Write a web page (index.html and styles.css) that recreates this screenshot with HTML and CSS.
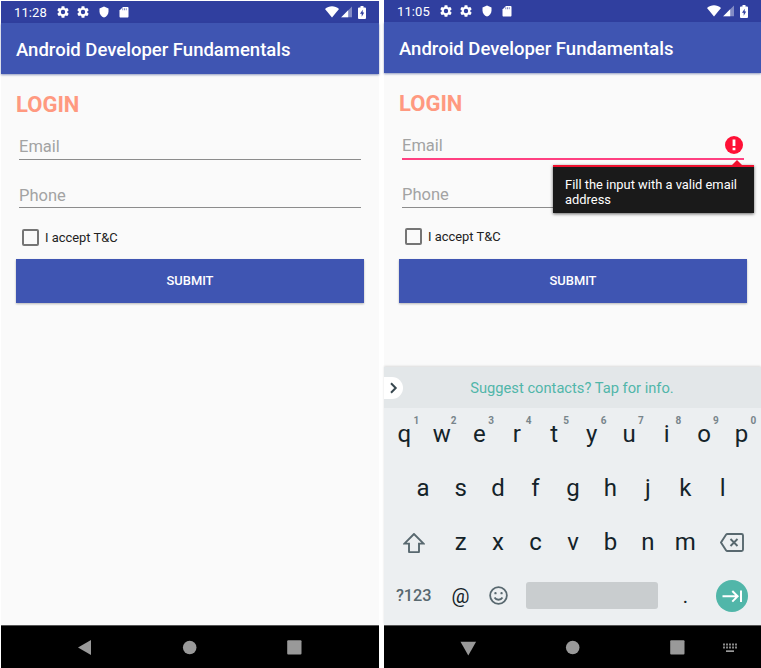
FILE: index.html
```html
<!DOCTYPE html>
<html lang="en">
<head>
<meta charset="utf-8">
<title>Android Developer Fundamentals</title>
<link rel="stylesheet" href="styles.css">
</head>
<body>
<svg class="defs" width="0" height="0">
  <symbol id="gear" viewBox="1.500 1.500 21 21"><path fill-rule="evenodd" d="M19.400 13c0-.3.1-.6.1-1s0-.7-.1-1l2.200-1.700c.2-.1.200-.4.100-.6l-2-3.500c-.1-.2-.4-.3-.6-.2l-2.500 1c-.5-.4-1.100-.7-1.700-1L14.500 2.400c0-.2-.2-.4-.5-.4h-4c-.3 0-.5.2-.5.4L9.100 5c-.6.300-1.200.6-1.700 1l-2.500-1c-.2-.1-.5 0-.6.200l-2 3.500c-.1.200-.1.500.1.600L4.600 11c0 .3-.1.700-.1 1s0 .7.100 1l-2.200 1.700c-.2.100-.2.400-.1.600l2 3.500c.1.200.4.300.6.200l2.500-1c.5.400 1.100.7 1.700 1l.4 2.600c0 .2.200.4.500.4h4c.3 0 .5-.2.5-.4l.4-2.600c.6-.3 1.200-.6 1.700-1l2.500 1c.2.100.5 0 .6-.2l2-3.500c.1-.2.100-.5-.1-.6zM12 15.800a3.800 3.800 0 1 1 0-7.600 3.800 3.800 0 0 1 0 7.600z"/></symbol>
  <symbol id="shield" viewBox="0 0 24 24"><path d="M12 1 3 5v6c0 5.600 3.800 10.700 9 12 5.200-1.300 9-6.400 9-12V5z"/></symbol>
  <symbol id="card" viewBox="0 0 24 24"><path d="M19 2H10L3 9v12c0 1 .8 2 2 2h14c1.200 0 2-1 2-2V4c0-1-.8-2-2-2z"/><path class="slots" d="M9.500 4.500v4M13 4.500v4M16.500 4.500v4"/></symbol>
  <symbol id="wifi" viewBox="0 0 14 12"><path d="M7 11.500 0 3C4-.7 10-.7 14 3z"/></symbol>
  <symbol id="signal" viewBox="0 0 12 12"><path opacity=".4" d="M0 12 12 0v12z"/><path d="M0 12 7.500 4.500V12z"/></symbol>
  <symbol id="battery" viewBox="0 0 8 13"><path fill-rule="evenodd" d="M2.500 0h3v1.500H7q1 0 1 1V12q0 1-1 1H1q-1 0-1-1V2.500q0-1 1-1h1.500zM4.700 3.800 2 7.700h1.700v3l2.500-4.100H4.700z"/></symbol>
</svg>
<main class="screens">
  <section class="phone phone-plain">
    <header class="status"><span class="time">11:28</span>
      <svg class="sicon"><use href="#gear"/></svg><svg class="sicon"><use href="#gear"/></svg><svg class="sicon"><use href="#shield"/></svg><svg class="sicon"><use href="#card"/></svg>
      <span class="spacer"></span><svg class="wifi"><use href="#wifi"/></svg><svg class="signal"><use href="#signal"/></svg><svg class="battery"><use href="#battery"/></svg>
    </header>
    <div class="appbar"><span>Android Developer Fundamentals</span></div>
    <div class="form">
      <h1>LOGIN</h1>
      <div class="field">Email</div>
      <div class="field phone-number">Phone</div>
      <div class="terms"><i class="box"></i><span>I accept T&amp;C</span></div>
      <div class="submit">SUBMIT</div>
    </div>
    <nav class="nav">
      <svg viewBox="0 0 378 42"><path d="M77 21.500 90 14v15z"/><circle cx="188.700" cy="21.500" r="6.800"/><rect x="286.200" y="14.300" width="14.300" height="14.300" rx="1"/></svg>
    </nav>
  </section>
  <section class="phone phone-error">
    <header class="status"><span class="time">11:05</span>
      <svg class="sicon"><use href="#gear"/></svg><svg class="sicon"><use href="#gear"/></svg><svg class="sicon"><use href="#shield"/></svg><svg class="sicon"><use href="#card"/></svg>
      <span class="spacer"></span><svg class="wifi"><use href="#wifi"/></svg><svg class="signal"><use href="#signal"/></svg><svg class="battery"><use href="#battery"/></svg>
    </header>
    <div class="appbar"><span>Android Developer Fundamentals</span></div>
    <div class="form">
      <h1>LOGIN</h1>
      <div class="field invalid">Email
        <svg class="alert" viewBox="0 0 18 18"><circle cx="9" cy="9" r="9"/><path d="M7.600 3.600h2.800v6.400H7.600zM7.600 11.700h2.800v2.600H7.600z"/></svg>
        <div class="tip"><span>Fill the input with a valid email address</span></div>
      </div>
      <div class="field phone-number">Phone</div>
      <div class="terms"><i class="box"></i><span>I accept T&amp;C</span></div>
      <div class="submit">SUBMIT</div>
    </div>
    <div class="keyboard">
      <div class="suggest"><span class="expand"><svg viewBox="0 0 19 22"><path d="m7 6.300 4.700 4.700L7 15.700"/></svg></span><span class="suggest-text">Suggest contacts? Tap for info.</span></div>
      <div class="keys">
        <div class="row"><b>q<sup>1</sup></b><b>w<sup>2</sup></b><b>e<sup>3</sup></b><b>r<sup>4</sup></b><b>t<sup>5</sup></b><b>y<sup>6</sup></b><b>u<sup>7</sup></b><b>i<sup>8</sup></b><b>o<sup>9</sup></b><b>p<sup>0</sup></b></div>
        <div class="row home"><b>a</b><b>s</b><b>d</b><b>f</b><b>g</b><b>h</b><b>j</b><b>k</b><b>l</b></div>
        <div class="row"><b class="wide"><svg class="shift" viewBox="0 0 22 20"><path d="M11 1 1.400 10.600H6V18.500q0 .8.800.8h8.400q.8 0 .8-.8V10.600h4.600z"/></svg></b><b>z</b><b>x</b><b>c</b><b>v</b><b>b</b><b>n</b><b>m</b><b class="wide"><svg class="erase" viewBox="0 0 24 19"><path d="M7.500 1H21.500q1.500 0 1.500 1.500v14q0 1.500-1.500 1.500H7.500Q6.500 18 6 17.200L1 9.500 6 1.800Q6.500 1 7.500 1zM10.500 6l7 7M17.500 6l-7 7"/></svg></b></div>
        <div class="row bottom"><b class="wide symbols">?123</b><b class="at">@</b><b><svg class="smile" viewBox="0 0 20 20"><circle cx="10" cy="10" r="8.800"/><path d="M5.800 12.200q1.400 2.300 4.200 2.300t4.200-2.300"/><path class="eyes" d="M6.800 7.500h.01M13.200 7.500h.01"/></svg></b><b class="space"><i></i></b><b class="dot">.</b><b class="wide"><svg class="next" viewBox="0 0 32 32"><circle cx="16" cy="16" r="16"/><path d="M6.500 16.300H21M16.300 11l5.300 5.300-5.300 5.300M25 10.500v11.500"/></svg></b></div>
      </div>
    </div>
    <nav class="nav">
      <svg viewBox="0 0 377 42"><path d="M76.500 15.800h15.600L84.300 29.500z"/><circle cx="188.700" cy="21.500" r="6.800"/><rect x="286.200" y="14.300" width="14.300" height="14.300" rx="1"/><path class="dots" d="M339 18.500h14M339 21.500h14"/><path d="M342 24.300h8v1.700h-8z"/></svg>
    </nav>
  </section>
</main>
</body>
</html>
```

FILE: styles.css
```css
* { box-sizing: border-box; }
body { margin: 0; background: #fff; font-family: Roboto, sans-serif; }
.defs { position: absolute; }
.screens { display: flex; gap: 5px; width: 761px; height: 668px; padding-left: 1px; overflow: hidden; }
.phone { display: flex; flex-direction: column; width: 378px; flex: none; background: #fafafa; }
.phone-plain { margin-top: 1px; height: 667px; }
.phone-error { width: 377px; height: 668px; }
.status { display: flex; align-items: center; height: 22px; flex: none; padding: 0 13px; background: #303f9f; color: #fff; }
.time { width: 42.500px; font-size: 13px; letter-spacing: .1px; }
.sicon { width: 12px; height: 12px; margin-right: 8.500px; fill: #fff; }
.slots { stroke: #303f9f; stroke-width: 1.200; }
.spacer { flex: 1; }
.wifi { width: 14px; height: 12px; fill: #fff; }
.signal { width: 11.500px; height: 11.500px; margin-left: 2px; fill: #fff; }
.battery { width: 8px; height: 13px; margin-left: 6px; fill: #fff; }
.appbar { display: flex; align-items: center; height: 51px; flex: none; padding: 2px 0 0 15px; background: #3f55b2; color: #fff; font-size: 18.500px; font-weight: 500; box-shadow: 0 1px 2px rgba(40, 60, 130, .5); white-space: nowrap; }
.form { flex: 1; padding: 0 15px; }
.phone-error .form { padding-right: 14px; }
h1 { margin: 0; height: 60px; line-height: 62px; font-size: 22px; font-weight: 700; color: #ff9980; }
.field { position: relative; height: 26px; margin: 0 3px 22px; line-height: 25px; font-size: 16.500px; color: #a3a3a3; border-bottom: 1px solid #8c8c8c; }
.phone-number { margin-bottom: 7px; line-height: 27px; }
.field.invalid { height: 27px; border-bottom: 2px solid #ff4081; }
.alert { position: absolute; right: 1px; top: 3px; width: 18px; height: 18px; }
.alert circle { fill: #ff1036; }
.alert path { fill: #fff; }
.tip { position: absolute; z-index: 2; right: -10px; top: 32px; width: 201px; height: 48px; padding: 10px 12px; background: #1a1a1a; border-top: 2px solid #f0102e; color: #fff; font-size: 12.900px; line-height: 15px; box-shadow: 0 1px 3px rgba(0, 0, 0, .6); }
.tip::before { content: ""; position: absolute; right: 12px; top: -7px; border: 5px solid transparent; border-top: 0; border-bottom: 5px solid #f0102e; }
.phone-error .phone-number { line-height: 26px; }
.terms { display: flex; align-items: center; height: 44px; padding-left: 6px; font-size: 12.900px; color: #222; }
.phone-error .terms { padding-bottom: 1px; }
.box { width: 17px; height: 17px; margin-right: 6px; border: 2px solid #757575; border-radius: 2px; }
.submit { height: 43.500px; line-height: 44px; background: #3f55b2; color: #fff; text-align: center; font-size: 12.900px; font-weight: 500; box-shadow: 0 1px 2px rgba(0, 0, 0, .28); }
.nav { height: 43px; flex: none; background: #000; border-top: 1px solid #555; }
.nav svg { display: block; width: 100%; height: 42px; margin-top: -.5px; fill: #999; }
.nav .dots { fill: none; stroke: #888; stroke-width: 2; stroke-dasharray: 2 1; }
.keyboard { height: 258px; flex: none; background: #eceff1; box-shadow: 0 -1px 2px rgba(0, 0, 0, .12); }
.suggest { display: flex; align-items: center; height: 41px; background: #e3e7e9; }
.expand { width: 19px; height: 22px; background: #fff; border-radius: 0 11px 11px 0; }
.expand svg { display: block; fill: none; stroke: #37474f; stroke-width: 2; }
.suggest-text { flex: 1; padding: 1px 20px 0 0; text-align: center; font-size: 14.700px; color: #51b6a9; }
.keys { margin-top: -1px; padding: 0 .8px 0 1.700px; }
.row { display: grid; grid-template-columns: repeat(20, 1fr); height: 54px; }
.row b { position: relative; grid-column: span 2; display: flex; align-items: center; justify-content: center; font-size: 24px; font-weight: 400; color: #142329; }
.home b:first-child { grid-column: 2 / span 2; }
.row .wide { grid-column: span 3; }
.row .wide svg { position: relative; top: .5px; }
.row .space { grid-column: span 8; }
.space i { width: 132px; height: 27px; flex: none; background: #c9cdcf; border-radius: 3px; }
sup { position: absolute; right: 4px; top: 8px; line-height: 12px; font-size: 10px; font-weight: 700; color: #78858b; }
.bottom { height: 52px; }
.row .symbols { font-size: 16.300px; font-weight: 500; color: #58686f; }
.row .at { padding-top: 2px; font-size: 20px; }
.row .dot { padding-top: 2px; font-size: 20px; }
.shift, .erase, .smile { fill: none; stroke: #58686f; stroke-width: 1.900; }
.shift { width: 22px; height: 20px; }
.erase { width: 24px; height: 19px; }
.smile { width: 19px; height: 19px; }
.eyes { stroke-width: 2.500; stroke-linecap: round; }
.next { width: 32px; height: 32px; flex: none; fill: #51b6a9; }
.next path { fill: none; stroke: #fff; stroke-width: 2; }
```
